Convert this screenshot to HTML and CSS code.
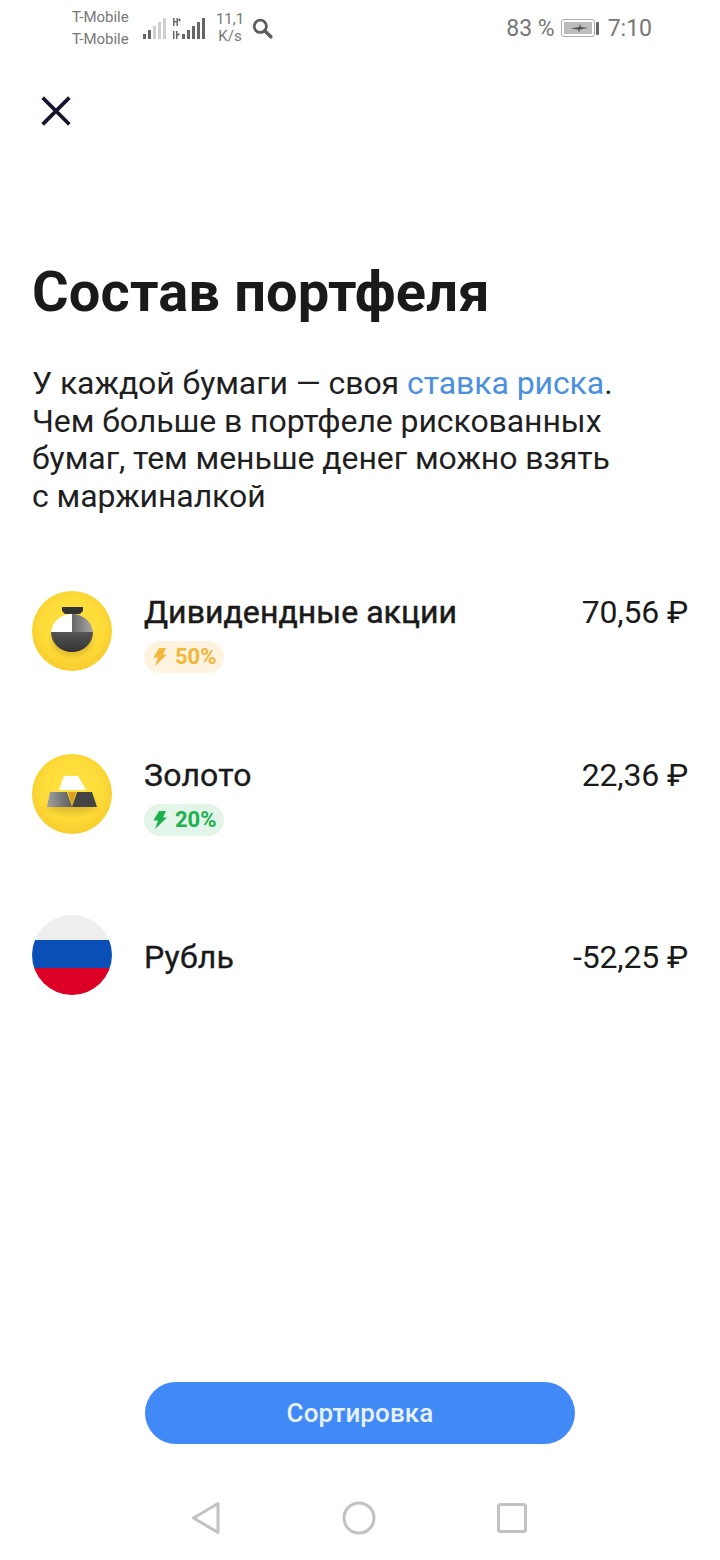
FILE: index.html
```html
<!DOCTYPE html>
<html lang="ru">
<head>
<meta charset="utf-8">
<title>Состав портфеля</title>
<link rel="stylesheet" href="styles.css">
</head>
<body>
<svg class="defs" width="0" height="0">
  <defs>
    <radialGradient id="sun" cx="50%" cy="45%" r="55%"><stop offset="0" stop-color="#ffe445"/><stop offset="0.7" stop-color="#fedb38"/><stop offset="1" stop-color="#f6cc2c"/></radialGradient>
    <linearGradient id="greyA" x1="0" x2="1" y1="0" y2="0"><stop offset="0" stop-color="#666"/><stop offset="1" stop-color="#a8a8a8"/></linearGradient>
    <linearGradient id="greyB" x1="0" x2="1" y1="0" y2="0"><stop offset="0" stop-color="#a0a0a0"/><stop offset="1" stop-color="#5c5c5c"/></linearGradient>
    <linearGradient id="dark" x1="0" x2="0" y1="0" y2="1"><stop offset="0" stop-color="#555"/><stop offset="1" stop-color="#333"/></linearGradient>
    <filter id="soft" x="-30%" y="-30%" width="160%" height="160%"><feGaussianBlur stdDeviation="3"/></filter>
    <clipPath id="flag"><circle cx="40" cy="40" r="40"/></clipPath>
  </defs>
</svg>
<div class="screen">
  <div class="status">
    <div class="carriers"><span>T-Mobile</span><span>T-Mobile</span></div>
    <svg class="signal" width="66" height="26" viewBox="0 0 66 26">
      <g fill="#666"><rect x="0" y="19" width="3" height="5"/><rect x="5" y="15" width="3" height="9"/></g>
      <g fill="#d0d0d0"><rect x="10" y="11" width="3" height="13"/><rect x="15" y="7" width="3" height="17"/><rect x="20" y="3" width="3" height="21"/></g>
      <g fill="#666">
        <path d="M30 3h1.500v3h2v-3h1.500v8h-1.500v-3.500h-2v3.500h-1.500z"/><path d="M36 3.500h1v1h1v1h-1v1h-1v-1h-1v-1h1z"/>
        <path d="M30 16h1.500v8h-1.500z"/><path d="M33 16h1.500v3l2-1v2l-2 1v3h-1.500z"/>
        <rect x="39" y="19" width="3" height="5"/><rect x="44" y="15" width="3" height="9"/><rect x="49" y="11" width="3" height="13"/><rect x="54" y="7" width="3" height="17"/><rect x="59" y="3" width="3" height="21"/>
      </g>
    </svg>
    <div class="speed"><span>11,1</span><span>K/s</span></div>
    <svg class="search" width="21" height="21" viewBox="0 0 24 24"><circle cx="9.500" cy="9.500" r="7" fill="none" stroke="#5c5c5c" stroke-width="3.200"/><path d="M14.500 14.500L21.500 21.500" stroke="#5c5c5c" stroke-width="4" stroke-linecap="round"/></svg>
    <div class="status-right">
      <span class="pct">83 %</span>
      <svg class="battery" width="40" height="20" viewBox="0 0 40 20"><rect x="0.500" y="1.500" width="33" height="17" rx="2.500" fill="#fff" stroke="#aaa"/><rect x="3" y="4" width="28" height="12" fill="#bdbdbd"/><rect x="35" y="4" width="3" height="13" rx="1" fill="#666"/><path d="M10 10.500l8-1.500 1-3 1 3 7 1-8 1.500-1 3-1-3z" fill="#555"/></svg>
      <span>7:10</span>
    </div>
  </div>

  <div class="close-row">
    <svg width="30" height="30" viewBox="0 0 30 30"><path d="M3 3L27 27M27 3L3 27" stroke="#14142b" stroke-width="3.800" stroke-linecap="square"/></svg>
  </div>

  <h1 class="title">Состав портфеля</h1>
  <p class="lead">У каждой бумаги — своя <a class="link">ставка риска</a>.<br>Чем больше в портфеле рискованных<br>бумаг, тем меньше денег можно взять<br>с маржиналкой</p>

  <ul class="assets">
    <li class="asset asset-div">
      <svg class="asset-icon" width="80" height="80" viewBox="0 0 80 80">
        <circle cx="40" cy="40" r="40" fill="url(#sun)"/>
        <ellipse cx="40" cy="50" rx="20" ry="15" fill="#b8901a" opacity="0.45" filter="url(#soft)"/>
        <path d="M30 16h21v4l-3 3H33l-3-3z" fill="#333"/>
        <path d="M19 41a21 20 0 0 0 42 0z" fill="url(#dark)"/>
        <path d="M40 41V23A21 20 0 0 0 19 41z" fill="#fff"/>
        <path d="M40 41V23A21 20 0 0 1 61 41z" fill="url(#greyA)"/>
      </svg>
      <div class="asset-body">
        <div class="asset-name">Дивидендные акции</div>
        <div class="badge badge-amber"><svg width="16" height="18" viewBox="0 0 16 18"><path d="M7 0h7l-3 6.500h4L3 18l3-8.500H1.500z" fill="currentColor"/></svg>50%</div>
      </div>
      <div class="asset-value">70,56 ₽</div>
    </li>
    <li class="asset asset-gold">
      <svg class="asset-icon" width="80" height="80" viewBox="0 0 80 80">
        <circle cx="40" cy="40" r="40" fill="url(#sun)"/>
        <ellipse cx="40" cy="52" rx="24" ry="7" fill="#b8901a" opacity="0.45" filter="url(#soft)"/>
        <path d="M32 22h14l8 14H27z" fill="#fff"/>
        <path d="M18 38h17l5 15H15z" fill="url(#greyB)"/>
        <path d="M45 38h15l5 15H40z" fill="#444"/>
        <path d="M36 38h8l-4 13z" fill="#d99f1c"/>
      </svg>
      <div class="asset-body">
        <div class="asset-name asset-name-light">Золото</div>
        <div class="badge badge-green"><svg width="16" height="18" viewBox="0 0 16 18"><path d="M7 0h7l-3 6.500h4L3 18l3-8.500H1.500z" fill="currentColor"/></svg>20%</div>
      </div>
      <div class="asset-value">22,36 ₽</div>
    </li>
    <li class="asset asset-rub">
      <svg class="asset-icon" width="80" height="80" viewBox="0 0 80 80">
        <g clip-path="url(#flag)"><rect width="80" height="25" fill="#eee"/><rect y="25" width="80" height="28" fill="#0a4fb5"/><rect y="53" width="80" height="27" fill="#dc0026"/></g>
      </svg>
      <div class="asset-body"><div class="asset-name asset-name-light">Рубль</div></div>
      <div class="asset-value">-52,25 ₽</div>
    </li>
  </ul>

  <div class="footer"><button class="sort">Сортировка</button></div>

  <div class="nav">
    <svg width="30" height="34" viewBox="0 0 30 34"><path d="M27 2.500V31.500L2.500 17z" fill="none" stroke="#c2c2c2" stroke-width="3" stroke-linejoin="round"/></svg>
    <svg width="34" height="34" viewBox="0 0 34 34"><circle cx="17" cy="17" r="15" fill="none" stroke="#c2c2c2" stroke-width="3"/></svg>
    <svg width="30" height="30" viewBox="0 0 30 30"><rect x="1.500" y="1.500" width="27" height="27" rx="2" fill="none" stroke="#c2c2c2" stroke-width="3"/></svg>
  </div>
</div>
</body>
</html>
```
FILE: styles.css
```css
* { box-sizing: border-box; }
html, body { margin: 0; padding: 0; background: #fff; }
.defs { display: block; height: 0; }
.screen {
  width: 720px; height: 1560px; display: flex; flex-direction: column;
  font-family: Roboto, "Noto Sans", sans-serif; color: #1a1a1a; overflow: hidden;
}
.status {
  height: 56px; display: flex; align-items: center; padding: 0 68px 0 72px; color: #777;
}
.carriers { display: flex; flex-direction: column; font-size: 15px; line-height: 22px; width: 71px; }
.signal { margin-right: 7px; }
.speed { display: flex; flex-direction: column; align-items: center; font-size: 15px; line-height: 17px; width: 28px; }
.search { margin-left: 8px; }
.status-right { margin-left: auto; display: flex; align-items: center; gap: 7px; font-size: 23px; }
.pct { margin-right: -1px; }
.close-row { height: 108px; padding: 40px 0 0 41px; line-height: 0; }
.title { margin: 96px 0 0 32px; font-size: 56px; line-height: 64px; font-weight: 700; letter-spacing: 0.150px; color: #1a1a1a; }
.lead { margin: 41px 0 0 32px; font-size: 32px; line-height: 37.700px; letter-spacing: -0.080px; color: #1f1f1f; }
.link { color: #4a8fe0; }
.assets { list-style: none; margin: 0; padding: 0 32px; }
.asset { display: flex; align-items: flex-start; }
.asset-div { margin-top: 75px; }
.asset-gold { margin-top: 81px; }
.asset-rub { margin-top: 79px; }
.asset-icon { flex: none; }
.asset-body { margin-left: 32px; flex: 1; }
.asset-name { font-size: 32px; line-height: 42px; font-weight: 400; letter-spacing: 0.050px; -webkit-text-stroke: 0.500px #1a1a1a; }
.asset-name-light { -webkit-text-stroke-width: 0.350px; letter-spacing: 0.200px; }
.asset-rub .asset-name { line-height: 84px; }
.asset-value { font-size: 32px; line-height: 42px; letter-spacing: -0.150px; }
.asset-rub .asset-value { line-height: 84px; }
.badge {
  display: inline-flex; align-items: center; gap: 7px; height: 32px; margin-top: 8px; padding: 0 7px 0 8px; border-radius: 16px;
  font-size: 22px; font-weight: 700; -webkit-text-stroke: 0;
}
.badge-amber { background: #fdf3de; color: #f0b73a; }
.badge-green { background: #e3f5e8; color: #1cb04e; }
.footer { margin-top: auto; display: flex; justify-content: center; }
.sort {
  width: 430px; height: 62px; padding: 0; border: 0; border-radius: 31px; background: #4189f7; color: #e8f1ff;
  font-family: inherit; font-size: 26px; font-weight: 500; letter-spacing: 0.100px;
}
.nav { height: 116px; display: flex; align-items: center; justify-content: space-between; padding: 32px 193px 0 191px; }
```
